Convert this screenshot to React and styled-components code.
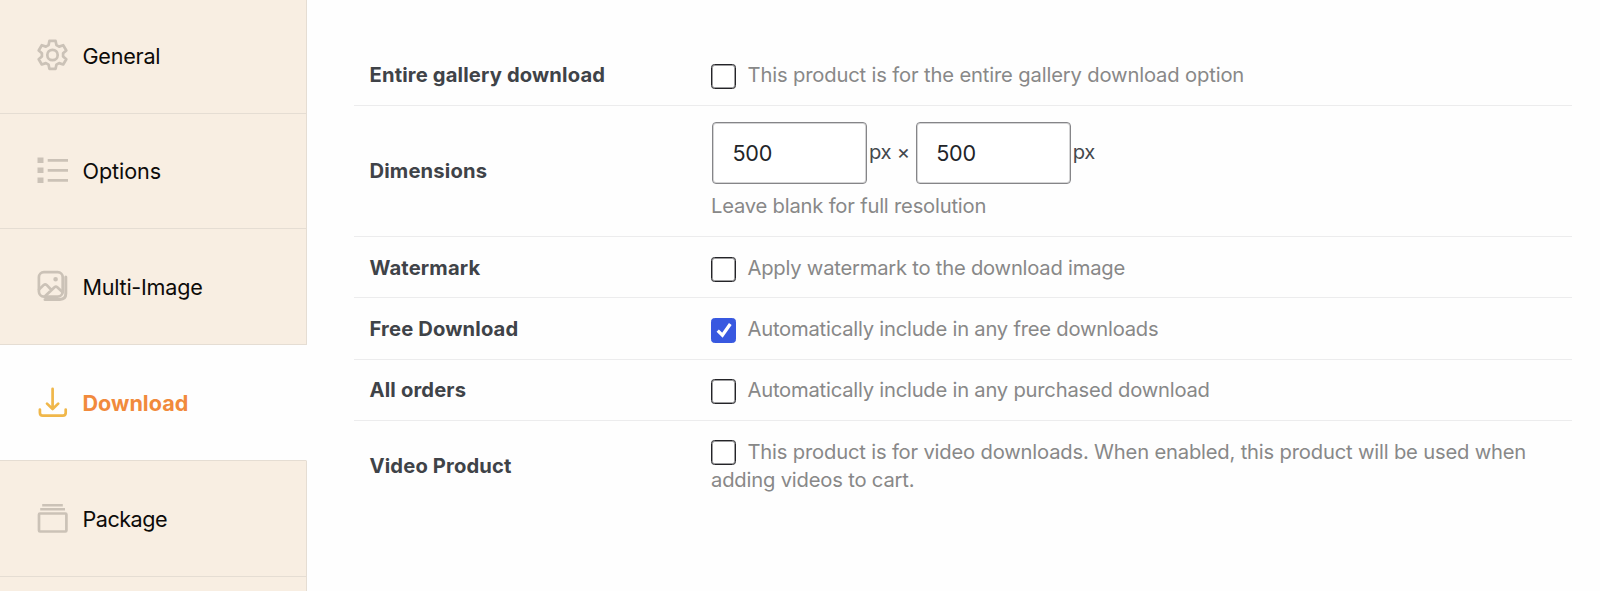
import React from "react";
import styled, { createGlobalStyle, css } from "styled-components";

const Global = createGlobalStyle`
  *, *::before, *::after { box-sizing: border-box; }
  html, body { margin: 0; background: #fefefe; }
  body { font-family: Inter, "Liberation Sans", sans-serif; overflow: hidden; }
`;

const Page = styled.div`
  display: flex;
  height: 591px;
  overflow: hidden;
`;

const Sidebar = styled.nav`
  width: 307px;
  flex: none;
  display: flex;
  flex-direction: column;
`;

const NavItem = styled.a`
  flex: none;
  height: ${(p) => p.$height}px;
  padding: 0 0 ${(p) => p.$lift || 0}px 36px;
  display: flex;
  align-items: center;
  gap: 13.5px;
  border-bottom: 1px solid #e5ddd3;
  border-right: 1px solid #e5ddd3;
  background: #f8eee2;
  color: #0d0b09;
  font-size: 21.6px;
  letter-spacing: ${(p) => p.$tracking}px;
  white-space: nowrap;
  ${(p) =>
    p.$active &&
    css`
      background: #fefefe;
      border-right-color: #fefefe;
      color: #f18a3c;
      font-weight: 700;
    `}
`;

const NavIcon = styled.svg`
  width: 33px;
  height: 33px;
  flex: none;
  fill: none;
  stroke: ${(p) => (p.$active ? "#f0b74a" : "#cbc2b7")};
  stroke-width: 2.7;
  stroke-linecap: ${(p) => p.$cap || "round"};
  stroke-linejoin: round;
  margin-top: -1px;
`;

const Main = styled.main`
  flex: 1;
  padding: 45px 28px 0 47px;
`;

const Row = styled.div`
  display: grid;
  grid-template-columns: 341px 1fr;
  align-items: center;
  height: ${(p) => p.$height}px;
  padding: ${(p) => p.$drop || 0}px 0 0 16px;
  border-bottom: 1px solid ${(p) => (p.$last ? "transparent" : "#ececed")};
  font-size: 20.2px;
  line-height: 28px;
`;

const Label = styled.div`
  color: #3f4348;
  font-weight: 700;
  letter-spacing: 0.15px;
  margin-left: -0.5px;
`;

const Description = styled.div`
  color: #888;
  letter-spacing: ${(p) => p.$tracking || -0.2}px;
`;

const Box = styled.span`
  display: inline-block;
  width: 25px;
  height: 25px;
  padding: 3.5px;
  margin-right: 11.5px;
  vertical-align: -6.5px;
  border: 1px solid ${(p) => (p.$checked ? "#3858e0" : "#242428")};
  border-radius: 3.5px;
  background: ${(p) => (p.$checked ? "#3858e0" : "#fff")};
  box-shadow: ${(p) => (p.$checked ? "none" : "inset 0 0 0 1px rgba(36, 36, 40, 0.45)")};
`;

const CheckMark = styled.svg`
  display: block;
  width: 16px;
  height: 16px;
  fill: none;
  stroke: #fff;
  stroke-width: 3.5;
`;

const SizeLine = styled.div`
  display: flex;
  align-items: center;
  color: #44484d;
  letter-spacing: -0.3px;
  padding-left: 1px;
`;

const SizeInput = styled.input`
  width: 155px;
  height: 62px;
  padding: 0 19.5px;
  border: 1px solid #858588;
  box-shadow: inset 0 0 0 1px rgba(133, 133, 136, 0.35);
  border-radius: 4px;
  background: #fff;
  color: #222428;
  font: 400 21.6px Inter, sans-serif;
  letter-spacing: -0.3px;
  outline: none;
`;

const Unit = styled.span`
  padding: 0 ${(p) => p.$after || 0}px 3px 2px;
`;

const Hint = styled(Description)`
  margin-top: 8px;
`;

function Checkbox({ checked }) {
  return (
    <Box role="checkbox" aria-checked={!!checked} $checked={checked}>
      {checked && (
        <CheckMark viewBox="0 0 17 17">
          <path d="M1.8 9.2 L6.8 14 L15.2 2.2" />
        </CheckMark>
      )}
    </Box>
  );
}

const icons = {
  gear: (
    <>
      <path d="M13.4 1.9h6.2l.8 4.2 2.7 1.5 4.1-1.4 3.1 5.3-3.2 2.8v3.1l3.2 2.8-3.1 5.3-4.1-1.4-2.7 1.6-.8 4.1h-6.2l-.8-4.1-2.7-1.6-4.1 1.4-3.1-5.3 3.2-2.8v-3.1l-3.2-2.8 3.1-5.3 4.1 1.4 2.7-1.5z" />
      <circle cx="16.5" cy="16" r="5.2" />
    </>
  ),
  list: (
    <>
      <path d="M11.7 6.3h20.3M11.7 16.3h20.3M11.7 26.3h20.3" strokeWidth="2.8" />
      <path d="M1.5 6.3h6M1.5 16.3h6M1.5 26.3h6" strokeWidth="5.6" />
    </>
  ),
  images: (
    <>
      <rect x="2.9" y="2.2" width="23.8" height="24.4" rx="5" />
      <path d="M29.8 7v16.6c0 3.7-2.3 5.8-5.8 5.8H9" strokeWidth="3" />
      <circle cx="19.6" cy="9.2" r="1.1" strokeWidth="2.4" />
      <path d="M3 19.5l4.8-4.6q1.4-1.2 2.8 0l4.6 4.8M9.5 25.8l9-8.6q1.4-1.2 2.8 0l5.4 5" />
    </>
  ),
  download: (
    <>
      <path d="M16.6 2.8v20M11 17.6l5.6 5.4 5.6-5.4" />
      <path d="M3.9 23.6v3.2c0 2 1 2.9 2.9 2.9h20c1.9 0 2.9-.9 2.9-2.9v-3.2" />
    </>
  ),
  stack: (
    <>
      <path d="M6.2 3.2h20.6M4.2 7.2h24.8" strokeWidth="2.5" />
      <rect x="3" y="11.5" width="27.4" height="18" rx="1" />
    </>
  ),
};

const navItems = [
  { text: "General", icon: "gear", height: 114, lift: 2, tracking: -0.25 },
  { text: "Options", icon: "list", height: 115, cap: "butt", tracking: -0.1 },
  { text: "Multi-Image", icon: "images", height: 116, tracking: -0.25 },
  { text: "Download", icon: "download", height: 116, active: true, tracking: 0 },
  { text: "Package", icon: "stack", height: 116, cap: "butt", tracking: -0.5 },
];

export default function App() {
  return (
    <>
      <Global />
      <Page>
        <Sidebar>
          {navItems.map((n) => (
            <NavItem key={n.text} $height={n.height} $lift={n.lift} $active={n.active} $tracking={n.tracking}>
              <NavIcon viewBox="0 0 33 33" $active={n.active} $cap={n.cap}>
                {icons[n.icon]}
              </NavIcon>
              {n.text}
            </NavItem>
          ))}
          <NavItem $height={40} />
        </Sidebar>
        <Main>
          <Row $height={61}>
            <Label>Entire gallery download</Label>
            <Description $tracking={-0.15}>
              <Checkbox />
              This product is for the entire gallery download option
            </Description>
          </Row>
          <Row $height={131}>
            <Label>Dimensions</Label>
            <div>
              <SizeLine>
                <SizeInput defaultValue="500" aria-label="Width" />
                <Unit $after={6}>px ×</Unit>
                <SizeInput defaultValue="500" aria-label="Height" />
                <Unit>px</Unit>
              </SizeLine>
              <Hint>Leave blank for full resolution</Hint>
            </div>
          </Row>
          <Row $height={61} $drop={2}>
            <Label>Watermark</Label>
            <Description $tracking={-0.22}>
              <Checkbox />
              Apply watermark to the download image
            </Description>
          </Row>
          <Row $height={62} $drop={1}>
            <Label>Free Download</Label>
            <Description $tracking={-0.22}>
              <Checkbox checked />
              Automatically include in any free downloads
            </Description>
          </Row>
          <Row $height={61}>
            <Label>All orders</Label>
            <Description $tracking={-0.22}>
              <Checkbox />
              Automatically include in any purchased download
            </Description>
          </Row>
          <Row $height={90} $last>
            <Label>Video Product</Label>
            <Description $tracking={-0.18}>
              <Checkbox />
              This product is for video downloads. When enabled, this product will be used when adding
              videos to cart.
            </Description>
          </Row>
        </Main>
      </Page>
    </>
  );
}
